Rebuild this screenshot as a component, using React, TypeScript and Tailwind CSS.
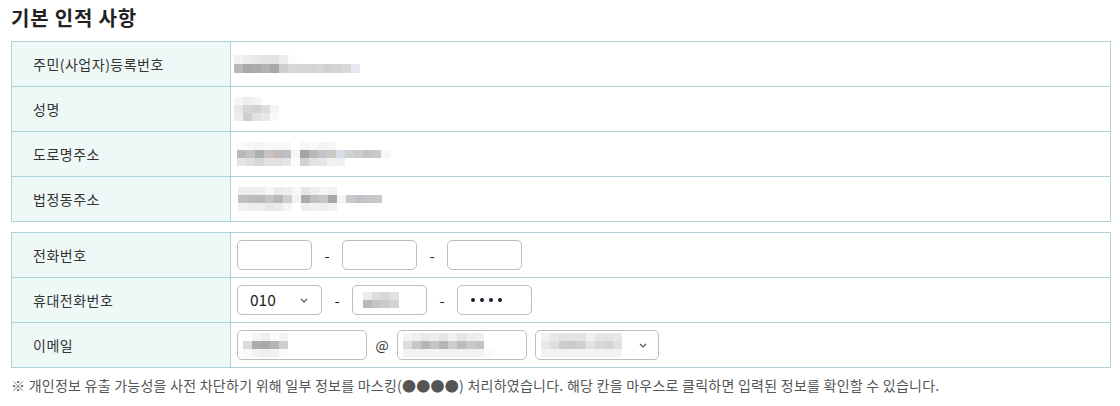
import React from "react";

const FONT = { fontFamily: '"Noto Sans CJK KR", "Noto Sans", sans-serif' };

function Mosaic({ rows, cw = 9, ch = 9 }: { rows: string[][]; cw?: number; ch?: number }) {
  return (
    <div className="flex flex-col blur-[0.6px]">
      {rows.map((r, i) => (
        <div key={i} className="flex">
          {r.map((c, j) => (
            <div key={j} style={{ width: cw, height: ch, background: c }} />
          ))}
        </div>
      ))}
    </div>
  );
}

function Chevron() {
  return (
    <svg width="8" height="5" viewBox="0 0 8 5" className="shrink-0">
      <path d="M1 1 L4 4 L7 1" fill="none" stroke="#555" strokeWidth="1.2" />
    </svg>
  );
}

function Box({ w, children, className = "" }: { w: string; children?: React.ReactNode; className?: string }) {
  return (
    <div className={`${w} h-[30px] border border-[#bdbdbd] rounded-[5px] bg-white flex items-center ${className}`}>
      {children}
    </div>
  );
}

function Dash() {
  return <span className="w-[30px] text-center text-[15px] text-[#222] leading-none">-</span>;
}

function Row({ label, children, last = false }: { label: string; children?: React.ReactNode; last?: boolean }) {
  return (
    <div className={`flex ${last ? "h-[44px]" : "h-[45px] border-b border-[#acd3d7]"}`}>
      <div className="w-[219px] shrink-0 border-r border-[#acd3d7] bg-[#eef8f7] flex items-center pl-[21px] text-[14px] tracking-[0.5px] text-[#333]">
        {label}
      </div>
      <div className="flex-1 flex items-center">{children}</div>
    </div>
  );
}

export default function App() {
  return (
    <div className="w-[1120px] h-[406px] bg-white px-[11px] overflow-hidden" style={FONT}>
      <h2 className="pt-[4px] text-[20px] leading-[28px] font-bold text-[#222] tracking-[0.8px]">기본 인적 사항</h2>
      <div className="mt-[9px] w-[1100px] border border-[#acd3d7]">
        <Row label="주민(사업자)등록번호">
          <div className="pl-[3px]">
            <Mosaic
              rows={[
                ["#f4f2f1", "#ececec", "#e8e8e8", "#e4e4e4", "#e2e2e2", "#ececef", "#fbfbfb", "#fff", "#fff", "#fff", "#fff", "#fff", "#fff", "#fff"],
                ["#b9b9b9", "#a9a9a9", "#ababab", "#b3b3b3", "#a9a9a6", "#cfcfcf", "#d7d7d3", "#d8d4d8", "#d3d3d8", "#d7d7d7", "#d1d1d1", "#d5d5d5", "#d9d9d9", "#e6e9f2"],
              ]}
            />
          </div>
        </Row>
        <Row label="성명">
          <div className="pl-[3px]">
            <Mosaic
              cw={9}
              ch={8}
              rows={[
                ["#f6f6f6", "#eeeeee", "#f4f4f4", "#fff", "#fff"],
                ["#e8e8e8", "#d6d6d6", "#d2d2d2", "#dddddd", "#f4f4f4"],
                ["#eeeeee", "#cfcfcf", "#e2e2e2", "#e8e8e8", "#fafafa"],
              ]}
            />
          </div>
        </Row>
        <Row label="도로명주소">
          <div className="pl-[6px]">
            <Mosaic
              cw={9}
              ch={8}
              rows={[
                ["#fafafa", "#f6f6f6", "#f4f4f4", "#f8f8f8", "#f6f6f6", "#f8f8f8", "#fff", "#f6f6f6", "#f8f8f8", "#f4f4f4", "#f6f6f6", "#fff", "#fff", "#fff", "#fff", "#fff", "#fff"],
                ["#bdb9b9", "#c2c2c2", "#abb0ae", "#c6c3c1", "#c7b9b6", "#bcbec8", "#f8f6f4", "#a4a6a3", "#b9b9bb", "#c2c3cc", "#cbc9c2", "#d8dce8", "#cfd1d3", "#cccccc", "#c3c3c3", "#c9c9c9", "#f4f6fb"],
                ["#e6e4e4", "#dedede", "#d5d7da", "#e2e2e2", "#e2dfdf", "#e6e6ea", "#fbfbfb", "#d2d2d2", "#e2e4e0", "#e6e6e6", "#f4f2f0", "#eef0f6", "#fff", "#fff", "#fff", "#fff", "#fff"],
              ]}
            />
          </div>
        </Row>
        <Row label="법정동주소" last>
          <div className="pl-[7px]">
            <Mosaic
              cw={9}
              ch={8}
              rows={[
                ["#eeeeee", "#f2eeec", "#eceef0", "#f6f6f6", "#eaeaea", "#eeeeee", "#f8f8f8", "#e6e6e6", "#eeeeee", "#f4f4f4", "#f0f0f0", "#fff", "#fff", "#fff", "#fff", "#fff"],
                ["#c3c1bf", "#bcbcbc", "#b6bbbb", "#c4c2c2", "#b9b6b8", "#cfcfcf", "#f4f2f0", "#a9acab", "#c0c0c0", "#c4c4cc", "#aba6a8", "#f2f4f6", "#c9c9c9", "#c1c3cb", "#c6c6c6", "#c8c8c8"],
                ["#f0f0f0", "#eeeeee", "#eeeeee", "#e6e6e6", "#ececec", "#f4f4f4", "#fff", "#eeeeee", "#f2f2f2", "#eeeeee", "#f2f2f2", "#fff", "#fff", "#fff", "#fff", "#fff"],
              ]}
            />
          </div>
        </Row>
      </div>

      <div className="mt-[10px] w-[1100px] border border-[#acd3d7]">
        <Row label="전화번호">
          <div className="pl-[6px] flex items-center">
            <Box w="w-[75px]" />
            <Dash />
            <Box w="w-[75px]" />
            <Dash />
            <Box w="w-[75px]" />
          </div>
        </Row>
        <Row label="휴대전화번호">
          <div className="pl-[6px] flex items-center">
            <Box w="w-[85px]" className="pl-[12px] pr-[13px] justify-between">
              <span className="text-[15.5px] text-[#222]">010</span>
              <Chevron />
            </Box>
            <Dash />
            <Box w="w-[75px]" className="pl-[10px]">
              <Mosaic
                cw={9}
                ch={8}
                rows={[
                  ["#ececec", "#dddddd", "#d8d8d8", "#e2e2e2"],
                  ["#b9b9b9", "#c5c5c5", "#cbcbcb", "#d3d3d3"],
                ]}
              />
            </Box>
            <Dash />
            <Box w="w-[75px]" className="pl-[13px] gap-[5px]">
              <span className="w-[4px] h-[4px] rounded-full bg-[#1a1a2a]" />
              <span className="w-[4px] h-[4px] rounded-full bg-[#1a1a2a]" />
              <span className="w-[4px] h-[4px] rounded-full bg-[#1a1a2a]" />
              <span className="w-[4px] h-[4px] rounded-full bg-[#1a1a2a]" />
            </Box>
          </div>
        </Row>
        <Row label="이메일" last>
          <div className="pl-[6px] flex items-center">
            <Box w="w-[130px]" className="pl-[5px]">
              <Mosaic
                cw={9}
                ch={8}
                rows={[
                  ["#fff", "#f4f4f4", "#eeeeee", "#fafafa", "#f2f2f2", "#fff"],
                  ["#ddd9d8", "#acacac", "#a8a8a8", "#b4b4b6", "#cfcfcf", "#fff"],
                  ["#fafafa", "#f2f2f2", "#eeeeee", "#f2f2f2", "#fafafa", "#fff"],
                ]}
              />
            </Box>
            <span className="w-[30px] text-center text-[14px] text-[#333]">@</span>
            <Box w="w-[130px]" className="pl-[5px]">
              <Mosaic
                cw={9}
                ch={8}
                rows={[
                  ["#f4f4f4", "#eeeeee", "#e8e8e8", "#ececec", "#e6e6e6", "#f0f0f0", "#e4e4e4", "#ececec", "#eeeeee", "#fff"],
                  ["#dedcdb", "#c6c6c6", "#b6b6b6", "#c4c4c4", "#b6b6b8", "#cccccc", "#bcbcbc", "#c9c9cc", "#c2c2c2", "#fff"],
                  ["#f2f2f2", "#f2f2f2", "#f2f2f2", "#f2f2f2", "#f2f2f2", "#f2f2f2", "#f2f2f2", "#f2f2f2", "#f2f2f2", "#fafafa"],
                ]}
              />
            </Box>
            <div className="w-[8px]" />
            <Box w="w-[124px]" className="pl-[5px] pr-[11px] justify-between">
              <Mosaic
                cw={9}
                ch={8}
                rows={[
                  ["#f2f2ee", "#e8e8e8", "#e2e2e4", "#e6e4e2", "#e4e4e4", "#f0f0f0", "#e6e6e6", "#e4e4e4", "#e8e8e8"],
                  ["#e8e8e8", "#e2dedd", "#cdcdcd", "#cbcbce", "#d0d0d6", "#e2e2e2", "#d8d8d8", "#d2d6d2", "#dee4dc"],
                  ["#f2f2f2", "#f2f2f2", "#f2f2f2", "#f2f2f2", "#f2f2f2", "#f2f2f2", "#f2f2f2", "#f2f2f2", "#f2f2f2"],
                ]}
              />
              <Chevron />
            </Box>
          </div>
        </Row>
      </div>

      <p className="mt-[7px] text-[14px] leading-[20px] tracking-[0.25px] text-[#555]">
        ※ 개인정보 유출 가능성을 사전 차단하기 위해 일부 정보를 마스킹(●●●●) 처리하였습니다. 해당 칸을 마우스로 클릭하면 입력된 정보를 확인할 수 있습니다.
      </p>
    </div>
  );
}
